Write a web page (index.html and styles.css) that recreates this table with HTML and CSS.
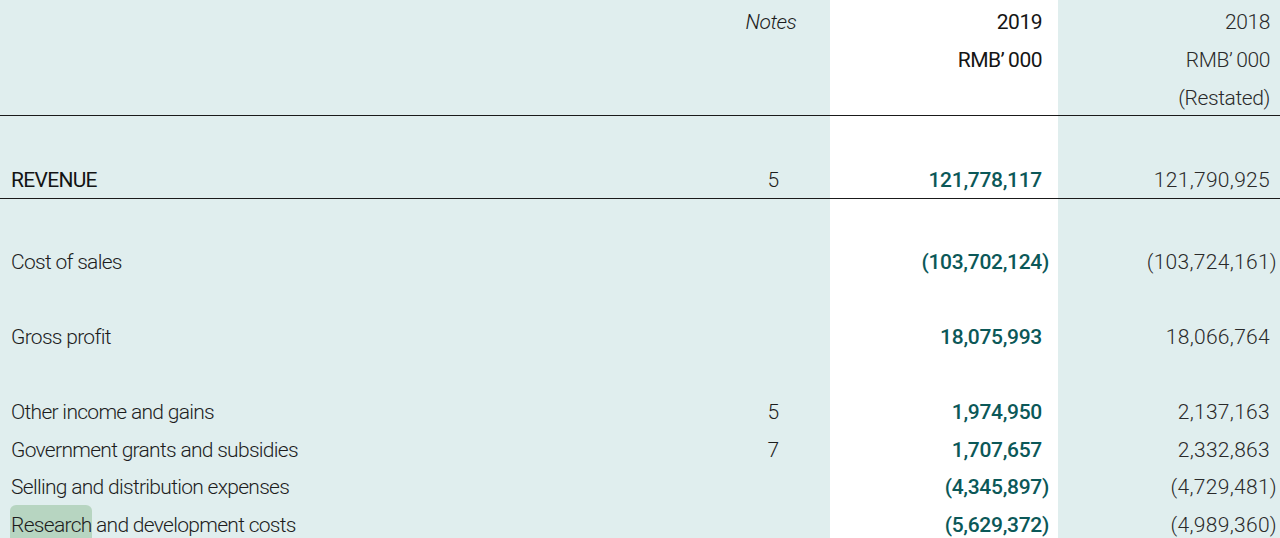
FILE: index.html
```html
<!DOCTYPE html>
<html lang="en">
<head>
<meta charset="utf-8">
<title>Income statement</title>
<link rel="stylesheet" href="styles.css">
</head>
<body>
<div class="sheet">
  <div class="row head">
    <div class="label"></div>
    <div class="note"><div class="line italic">Notes</div></div>
    <div class="cur">
      <div class="line strong">2019</div>
      <div class="line strong">RMB’&#8201;000</div>
    </div>
    <div class="prev">
      <div class="line">2018</div>
      <div class="line">RMB’&#8201;000</div>
      <div class="line">(Restated)</div>
    </div>
  </div>

  <div class="row revenue">
    <div class="label">REVENUE</div>
    <div class="note">5</div>
    <div class="cur">121,778,117</div>
    <div class="prev">121,790,925</div>
  </div>

  <div class="body">
    <div class="row">
      <div class="label">Cost of sales</div>
      <div class="note"></div>
      <div class="cur"><span class="neg">(103,702,124)</span></div>
      <div class="prev"><span class="neg">(103,724,161)</span></div>
    </div>
    <div class="row spacer"></div>
    <div class="row">
      <div class="label">Gross profit</div>
      <div class="note"></div>
      <div class="cur">18,075,993</div>
      <div class="prev">18,066,764</div>
    </div>
    <div class="row spacer"></div>
    <div class="row">
      <div class="label">Other income and gains</div>
      <div class="note">5</div>
      <div class="cur">1,974,950</div>
      <div class="prev">2,137,163</div>
    </div>
    <div class="row">
      <div class="label">Government grants and subsidies</div>
      <div class="note">7</div>
      <div class="cur">1,707,657</div>
      <div class="prev">2,332,863</div>
    </div>
    <div class="row">
      <div class="label">Selling and distribution expenses</div>
      <div class="note"></div>
      <div class="cur"><span class="neg">(4,345,897)</span></div>
      <div class="prev"><span class="neg">(4,729,481)</span></div>
    </div>
    <div class="row">
      <div class="label"><span class="hl">Research</span> and development costs</div>
      <div class="note"></div>
      <div class="cur"><span class="neg">(5,629,372)</span></div>
      <div class="prev"><span class="neg">(4,989,360)</span></div>
    </div>
  </div>
</div>
</body>
</html>
```

FILE: styles.css
```css
* { box-sizing: border-box; }

html, body {
  margin: 0;
  padding: 0;
  height: 100%;
  overflow: hidden;
}

body {
  font-family: Roboto, "Liberation Sans", sans-serif;
  font-weight: 300;
  font-size: 21px;
  letter-spacing: -0.7px;
  color: #1d1d1d;
  background: #e0eeee;
}

.sheet {
  width: 1280px;
  height: 538px;
  background: linear-gradient(to right,
    #e0eeee 0, #e0eeee 830px,
    #ffffff 830px, #ffffff 1058px,
    #e0eeee 1058px, #e0eeee 100%);
}

.row {
  display: grid;
  grid-template-columns: 716px 114px 228px 222px;
  line-height: 37.5px;
  height: 37.5px;
}

.label {
  padding-left: 11px;
  white-space: nowrap;
}

.note {
  text-align: center;
}

.cur {
  text-align: right;
  padding-right: 16px;
  color: #0b5858;
  font-weight: 500;
  letter-spacing: -0.3px;
}

.prev {
  text-align: right;
  padding-right: 10px;
  color: #2a2a2a;
  letter-spacing: 0.3px;
}

.head {
  height: 115.5px;
  padding-top: 2.5px;
  line-height: 38px;
  border-bottom: 1.5px solid #1a1a1a;
}

.head .line {
  height: 38px;
}

.head .prev {
  letter-spacing: -0.4px;
}

.italic {
  font-style: italic;
  padding-right: 4px;
  letter-spacing: -0.5px;
}

.head .strong {
  color: #151515;
  font-weight: 400;
  letter-spacing: -0.5px;
}

.revenue {
  height: 39px;
  margin-top: 44px;
  padding-top: 2.5px;
  border-bottom: 1.5px solid #1a1a1a;
}

.revenue .label {
  font-weight: 400;
  color: #141414;
}

.body {
  padding-top: 45.5px;
}

.neg {
  margin-right: -7px;
}

.hl {
  background: #b7d5c1;
  border-radius: 6px;
  padding: 8px 0 12px 1px;
  margin-left: -1px;
}
```
